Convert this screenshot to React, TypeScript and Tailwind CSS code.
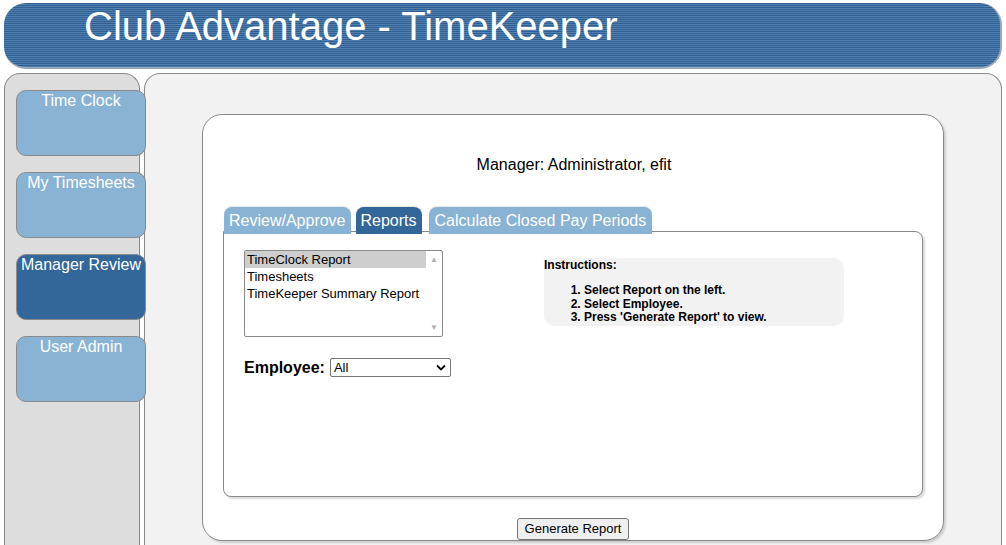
import { useState } from "react";

const navItems = ["Time Clock", "My Timesheets", "Manager Review", "User Admin"];
const tabs = ["Review/Approve", "Reports", "Calculate Closed Pay Periods"];
const reports = ["TimeClock Report", "Timesheets", "TimeKeeper Summary Report"];

export default function App() {
  const [active, setActive] = useState("Reports");
  const [report, setReport] = useState(reports[0]);

  return (
    <div className="w-[1006px] h-[545px] overflow-hidden bg-white font-['Liberation_Sans',Arial,sans-serif] text-black">
      {/* header bar */}
      <div className="mx-[4px] mt-[3px] h-[66px] rounded-[22px] border-b-2 border-r-2 border-[#9aa7b5] bg-[repeating-linear-gradient(to_bottom,#2f5f93_0px,#2f5f93_1px,#5080b0_1px,#5080b0_2px)] pl-[80px]">
        <h1 className="text-[40px] leading-[46px] text-white">Club Advantage - TimeKeeper</h1>
      </div>

      <div className="flex mt-[4px] mx-[4px] gap-[4px] h-[480px]">
        {/* sidebar */}
        <div className="w-[136px] shrink-0 rounded-t-[16px] border border-b-0 border-[#8a8a8a] bg-[#dddddd] pt-[16px] pl-[11px] relative z-10">
          <div className="flex flex-col gap-[16px] w-[130px]">
            {navItems.map((n) => (
              <div
                key={n}
                className={`h-[66px] rounded-[10px] border border-[#8a8a8a] text-center text-[16px] leading-[19px] text-white ${
                  n === "Manager Review" ? "bg-[#336699]" : "bg-[#89b3d4]"
                }`}
              >
                {n}
              </div>
            ))}
          </div>
        </div>

        {/* main area */}
        <div className="flex-1 rounded-t-[16px] border border-b-0 border-[#8a8a8a] bg-[#f2f2f2] pt-[40px] pl-[57px]">
          <div className="w-[742px] h-[427px] rounded-[20px] border border-[#8a8a8a] bg-white shadow-[2px_2px_2px_rgba(0,0,0,0.15)] pt-[41px] px-[20px] flex flex-col">
            <div className="text-center text-[16px] leading-[18px] pl-[2px]">Manager: Administrator, efit</div>

            <div className="mt-[32px] flex items-end h-[28px]">
              <div className="flex items-end pl-[1px] relative">
                {tabs.map((t, i) => (
                  <button
                    key={t}
                    onClick={() => setActive(t)}
                    className={`h-[27px] rounded-t-[8px] text-[16px] leading-[27px] text-white ${
                      i === 0 ? "px-[5px]" : i === 1 ? "ml-[5px] px-[5px]" : "ml-[7px] px-[6px]"
                    } ${active === t ? "bg-[#336699]" : "bg-[#89b3d4]"} shadow-[0_-1px_1px_rgba(0,0,0,0.1)]`}
                  >
                    {t}
                  </button>
                ))}
              </div>
            </div>

            <div className="-mt-[3px] h-[268px] rounded-b-[8px] rounded-tr-[8px] border border-[#8a8a8a] bg-white shadow-[2px_2px_2px_rgba(0,0,0,0.15)] pt-[18px] pl-[20px] flex">
              <div className="w-[300px]">
                <div className="flex w-[199px] h-[87px] border border-[#8a8a8a] rounded-[2px] text-[13px] leading-[17px]">
                  <div className="flex-1">
                    {reports.map((r) => (
                      <div
                        key={r}
                        onClick={() => setReport(r)}
                        className={`pl-[2px] h-[17px] whitespace-nowrap ${r === report ? "bg-[#cecece]" : ""}`}
                      >
                        {r}
                      </div>
                    ))}
                  </div>
                  <div className="w-[16px] flex flex-col justify-between items-center py-[4px] text-[#b0b0b0] text-[8px] leading-[9px]">
                    <span>▲</span>
                    <span>▼</span>
                  </div>
                </div>

                <div className="mt-[19px] flex items-center gap-[5px]">
                  <span className="text-[16px] font-bold">Employee:</span>
                  <div className="w-[121px] h-[19px] border border-[#767676] rounded-[2px] flex items-center justify-between pl-[3px] pr-[4px] text-[13px]">
                    <span>All</span>
                    <svg width="10" height="7" viewBox="0 0 10 7">
                      <path d="M1 1.5 L5 5.5 L9 1.5" fill="none" stroke="#000" strokeWidth="1.8" />
                    </svg>
                  </div>
                </div>
              </div>

              <div className="mt-[8px] w-[300px] h-[68px] rounded-[10px] bg-[#f2f2f2] text-[12px] font-bold leading-[13.5px]">
                <div className="pt-[1px]">Instructions:</div>
                <ol className="mt-[12px] pl-[40px] list-decimal">
                  <li>Select Report on the left.</li>
                  <li>Select Employee.</li>
                  <li>Press 'Generate Report' to view.</li>
                </ol>
              </div>
            </div>

            <div className="mt-[21px] flex justify-center">
              <button className="h-[22px] px-[7px] rounded-[3px] border border-[#767676] bg-[#efefef] text-[13px] leading-[20px]">
                Generate Report
              </button>
            </div>
          </div>
        </div>
      </div>
    </div>
  );
}
